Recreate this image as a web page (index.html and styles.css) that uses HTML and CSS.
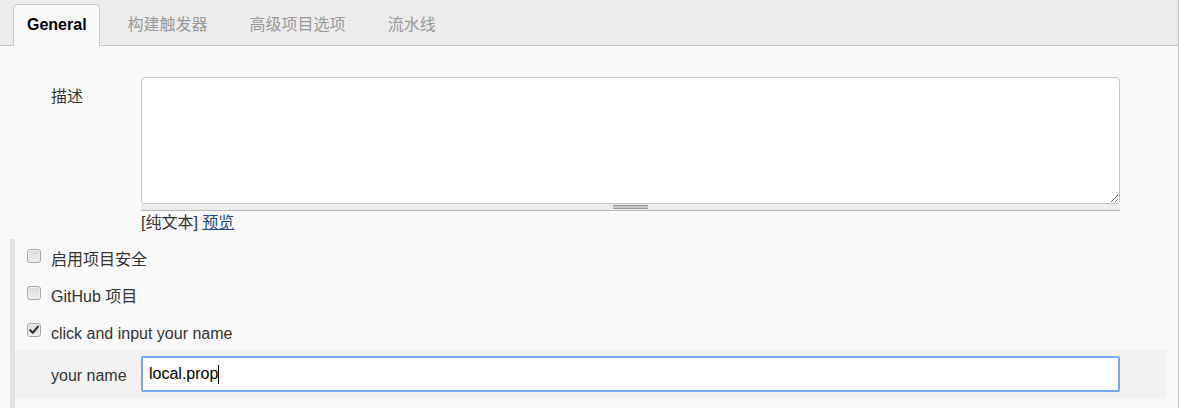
FILE: index.html
```html
<!DOCTYPE html>
<html lang="zh">
<head>
<meta charset="utf-8">
<title>General</title>
<link rel="stylesheet" href="styles.css">
</head>
<body>
<div class="page">
  <div class="tabbar">
    <div class="tab active">General</div>
    <div class="tab">构建触发器</div>
    <div class="tab">高级项目选项</div>
    <div class="tab">流水线</div>
  </div>
  <div class="content">
    <div class="desc-row">
      <div class="label desc-label">描述</div>
      <div class="field">
        <textarea class="desc-text"></textarea>
        <div class="grippie"><span class="grip"></span></div>
        <div class="markup">[纯文本] <a href="#" class="link">预览</a></div>
      </div>
    </div>
    <div class="section">
      <div class="check-row">
        <span class="cb"></span>
        <span class="check-label">启用项目安全</span>
      </div>
      <div class="check-row">
        <span class="cb"></span>
        <span class="check-label">GitHub 项目</span>
      </div>
      <div class="check-row">
        <span class="cb checked"><svg width="12" height="12" viewBox="0 0 12 12"><path d="M2.2 6.2 L4.8 8.8 L10 2.6" fill="none" stroke="#333" stroke-width="2.2" stroke-linecap="round" stroke-linejoin="round"/></svg></span>
        <span class="check-label">click and input your name</span>
      </div>
      <div class="nested">
        <div class="label name-label">your name</div>
        <div class="name-input"><span class="val">local.prop</span><span class="caret"></span></div>
      </div>
    </div>
  </div>
</div>
</body>
</html>
```

FILE: styles.css
```css
* { box-sizing: border-box; }
html, body {
  margin: 0;
  padding: 0;
  background: #f9f9f9;
}
body {
  font-family: "Liberation Sans", Arial, "Noto Sans CJK SC", sans-serif;
  font-size: 16px;
  color: #333;
  height: 408px;
  overflow: hidden;
}
.page {
  width: 1179px;
  height: 408px;
  border-right: 1px solid #c4c4c4;
  background: #f9f9f9;
}
.tabbar {
  display: flex;
  align-items: flex-start;
  height: 46px;
  padding: 4px 0 0 13px;
  background: #ececec;
  border-bottom: 1px solid #c9c9c9;
}
.tab {
  height: 42px;
  margin-bottom: -1px;
  padding: 0 13px 0 13px;
  margin-right: 14px;
  line-height: 40px;
  border: 1px solid transparent;
  border-bottom: none;
  color: #999;
  white-space: nowrap;
}
.tab.active {
  background: #f9f9f9;
  border-color: #c9c9c9;
  border-radius: 5px 5px 0 0;
  padding-right: 12px;
  color: #000;
  font-weight: bold;
}
.content {
  padding-top: 31px;
}
.desc-row {
  display: flex;
  padding-left: 51px;
}
.label {
  width: 90px;
  flex: none;
  line-height: 20px;
  color: #333;
}
.desc-label {
  padding-top: 10px;
}
.field {
  width: 979px;
}
.desc-text {
  display: block;
  width: 979px;
  height: 127px;
  margin: 0;
  border: 1px solid #c6c6c6;
  border-radius: 4px 4px 3px 3px;
  background: #fff;
  font: inherit;
}
.grippie {
  height: 7px;
  background: #ececec;
  border-bottom: 1px solid #b9b9b9;
  display: flex;
  justify-content: center;
  align-items: flex-start;
}
.grip {
  display: block;
  width: 35px;
  height: 4px;
  margin-top: 1px;
  border-top: 1px solid #999;
  border-bottom: 1px solid #999;
  background: #c8c8c8;
}
.markup {
  line-height: 22px;
  padding-top: 1px;
  color: #333;
}
.link {
  color: #204a87;
  text-decoration: underline;
}
.section {
  margin-top: 5px;
  margin-left: 10px;
  border-left: 5px solid #e2e2e2;
  padding-bottom: 9px;
}
.check-row {
  display: flex;
  align-items: flex-start;
  height: 37px;
  padding: 10px 0 0 12px;
}
.check-row .check-label {
  position: relative;
  top: 1px;
}
.cb {
  width: 14px;
  height: 14px;
  flex: none;
  border: 1px solid #a8a8a8;
  border-radius: 3px;
  background: linear-gradient(#dcdcdc, #ececec);
  box-shadow: inset 0 0 0 1px #eee;
  display: flex;
  align-items: center;
  justify-content: center;
}
.cb svg { display: block; }
.check-label {
  margin-left: 10px;
  line-height: 20px;
  color: #333;
}
.nested {
  display: flex;
  align-items: center;
  margin-right: 12px;
  padding: 6px 46px 7px 36px;
  background: #f2f2f2;
}
.name-label {
  padding-top: 3px;
}
.name-input {
  width: 979px;
  height: 36px;
  border: 2px solid #7ba8f2;
  border-radius: 2px;
  background: #fff;
  padding-left: 6px;
  display: flex;
  align-items: center;
  color: #000;
  font-size: 16px;
}
.caret {
  display: inline-block;
  width: 1px;
  height: 19px;
  background: #000;
}
```
